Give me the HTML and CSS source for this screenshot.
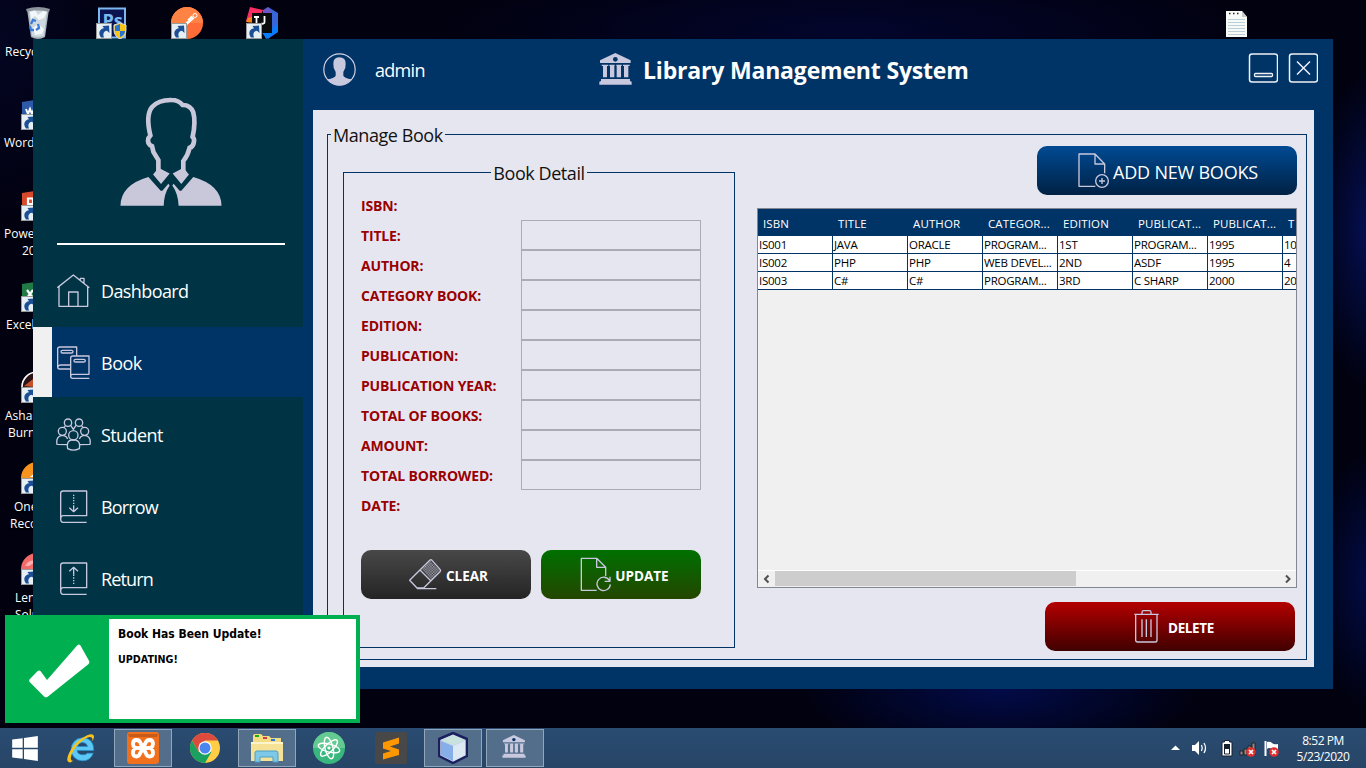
FILE: index.html
```html
<!DOCTYPE html>
<html lang="en">
<head>
<meta charset="utf-8">
<title>Library Management System</title>
<link rel="stylesheet" href="styles.css">
</head>
<body>
<svg width="0" height="0" class="defs">
  <defs>
    <symbol id="shortcut" viewBox="0 0 16 16">
      <rect x=".5" y=".5" width="15" height="15" fill="#e6f0f4" stroke="#9a9a9a"/>
      <path d="M5 14.500C1.500 10 4 5.500 8 5.200L6.500 3 13 2.500 13.500 10 11 7.800C8 8 6.500 10.500 8 14.500Z" fill="#1c4f96"/>
    </symbol>
    <symbol id="bank" viewBox="0 0 99 96">
      <path d="M49 0 95 22V30H3V22ZM8 35H28V39H8ZM31 35H47V39H31ZM52 35H68V39H52ZM72 35H92V39H72ZM12 39H24V73H12ZM33 39H46V73H33ZM53 39H66V73H53ZM75 39H88V73H75ZM6 78H93V84L98 86V95H1V86L6 84Z" fill="#c8c8de"/>
      <circle cx="49" cy="19" r="7" class="bank-hole"/>
    </symbol>
    <symbol id="badge" viewBox="0 0 10 10"><circle cx="5" cy="5" r="4.800" fill="#e03030"/><path d="M3 3 7 7M7 3 3 7" stroke="#fff" stroke-width="1.700"/></symbol>
  </defs>
</svg>

<div class="desktop">
  <svg class="icon recycle" viewBox="0 0 26 34" width="26" height="34">
    <path d="M2 3 24 3 20 31Q13 35 6 31Z" fill="#aab5bf"/><path d="M4 5 22 5 19 30Q13 32 7 30Z" fill="#cfd8de"/>
    <path d="M5 6 10 4 13 9 18 5 22 6 19 12 14 14 10 10 6 13ZM8 22 13 18 19 23 17 28 10 29Z" fill="#f3f7fa"/>
    <path d="M1 3Q13-1 25 3L24 6Q13 2 2 6Z" fill="#8d949a"/>
    <path d="M6 18 8 14 11 15M5 20 6 24 9 24M11 24 14 22 13 18" fill="none" stroke="#3a7bd8" stroke-width="2.300"/>
  </svg>
  <svg class="icon photoshop" viewBox="0 0 32 32" width="32" height="32">
    <rect x="3" y="1.500" width="26" height="29" fill="#0a1450" stroke="#7cb8f0" stroke-width="2"/>
    <text x="6.500" y="20" class="ps-text">Ps</text>
    <use href="#shortcut" x="0" y="16" width="16" height="16"/>
    <path d="M24 16 30 18V23Q30 29 24 32 18 29 18 23V18Z" fill="#f5c518" stroke="#d7dbe0"/><path d="M24 17V24H19V19ZM24 24H29Q29 28 24 30Z" fill="#2a72d0"/>
  </svg>
  <svg class="icon postman" viewBox="0 0 32 32" width="32" height="32">
    <circle cx="16" cy="16" r="16" fill="#ff6c37"/><path d="M0 16A16 16 0 0 1 32 16Z" fill="#ff8344"/>
    <circle cx="24" cy="8.500" r="2" fill="none" stroke="#fff"/><path d="M22 10 13 18M23 11 15 18M21 9 17 13" stroke="#fff" stroke-width="1.300"/>
    <use href="#shortcut" x="0" y="16" width="16" height="16"/>
  </svg>
  <svg class="icon intellij" viewBox="0 0 32 32" width="32" height="32">
    <path d="M4 0 17 3 12 16 0 14Z" fill="#fb2d60"/><path d="M2 11 8 9 8 16 0 15Z" fill="#f7821e"/><path d="M22 0 32 6 32 25 22 32 16 26Z" fill="#3766d8"/><path d="M26 22 32 16V25L20 32 17 26Z" fill="#087cfa"/><path d="M17 3 22 0 26 6H17Z" fill="#6a58c8"/>
    <rect x="6" y="6" width="20" height="20" fill="#0b0b0d"/><path d="M8 10H13M10.500 10V17M8 17H13M18.500 9V15Q18.500 17.300 15 16.600" fill="none" stroke="#fff" stroke-width="1.800"/>
    <use href="#shortcut" x="0" y="16" width="16" height="16"/>
  </svg>
  <svg class="icon notes" viewBox="0 0 21 26" width="21" height="26">
    <path d="M0 0H16L21 6V26H0Z" fill="#f8faf8"/><path d="M16 0V6H21Z" fill="#c8ccc8"/>
    <path d="M2 8.500H19M2 11.500H19M2 14.500H19M2 17.500H19M2 20.500H19M2 23.500H19" stroke="#b9cfd9"/>
    <path d="M3 2.500H4.500M7 2.500H8.500M11 2.500H12.500" stroke="#222" stroke-width="1.500"/>
  </svg>
  <span class="caption recycle-name">Recycle</span>

  <svg class="icon side-icon word" viewBox="0 0 32 32" width="32" height="32"><path d="M1 4 20 1V31H1Z" fill="#2c5aa8"/><path d="M5 11 7 16 9 11 11 16 13 11" fill="none" stroke="#fff" stroke-width="2"/><use href="#shortcut" x="0" y="16" width="16" height="16"/></svg>
  <span class="caption word-name">Word 2013</span>
  <svg class="icon side-icon powerpoint" viewBox="0 0 32 32" width="32" height="32"><path d="M1 4 20 1V31H1Z" fill="#d6492a"/><path d="M7 18V9.500H12V15H8" fill="none" stroke="#fff" stroke-width="2.200"/><use href="#shortcut" x="0" y="16" width="16" height="16"/></svg>
  <span class="caption powerpoint-name">PowerPoint<br><i>2013</i></span>
  <svg class="icon side-icon excel" viewBox="0 0 32 32" width="32" height="32"><path d="M1 4 20 1V31H1Z" fill="#217a46"/><path d="M6 10 12 18M12 10 6 18" stroke="#fff" stroke-width="2.200"/><use href="#shortcut" x="0" y="16" width="16" height="16"/></svg>
  <span class="caption excel-name">Excel 2013</span>
  <svg class="icon side-icon burning" viewBox="0 0 32 32" width="32" height="32"><circle cx="16" cy="16" r="15" fill="#2a1216" stroke="#fff" stroke-width="1.600"/><path d="M3 15 12 8V16Z" fill="#c4502a"/><use href="#shortcut" x="0" y="16" width="16" height="16"/></svg>
  <span class="caption burning-name">Ashampoo<br><i>Burning</i></span>
  <svg class="icon side-icon recorder" viewBox="0 0 32 32" width="32" height="32"><circle cx="16" cy="16" r="16" fill="#f8941d"/><path d="M9 15 16 9V15Z" fill="#fff"/><use href="#shortcut" x="0" y="16" width="16" height="16"/></svg>
  <span class="caption recorder-name">One Click<br><i>Recorder</i></span>
  <svg class="icon side-icon lenovo" viewBox="0 0 32 32" width="32" height="32"><circle cx="16" cy="16" r="16" fill="#f26a6a"/><path d="M4 13Q8 6 16 8L8 13Z" fill="#ffb0b0"/><use href="#shortcut" x="0" y="16" width="16" height="16"/></svg>
  <span class="caption lenovo-name">Lenovo<br><i>Solution</i></span>

  <section class="window">
    <aside class="sidebar">
      <svg class="portrait" viewBox="360 290 306 328" width="102" height="109">
        <path d="M475 515V480L460 455 456 438Q440 432 445 414L451 406Q436 345 456 320 476 298 515 299 535 299 548 314 572 314 580 336 588 365 578 410 584 416 582 425 580 440 569 443 564 466 550 483V515" fill="none" stroke="#c8c8da" stroke-width="14"/>
        <path d="M470 510 477 504 509 520 483 552 459 523ZM556 510 549 504 518 520 544 552 567 523ZM445 531 482 572H487L505 551 509 556Q492 580 491 617H361Q362 555 445 531ZM580 531 544 572H539L521 551 517 556Q534 580 536 617H665Q664 555 580 531Z" fill="#c8c8da"/>
      </svg>
      <hr class="rule">
      <nav class="menu">
        <a class="item"><svg viewBox="0 0 99 99" width="33" height="33"><path d="M1 41 49 3 97 41M6 38V97H92V38M35 97V54H63V97M70 17V13H81V28" class="line"/></svg><span>Dashboard</span></a>
        <a class="item active"><svg viewBox="0 0 99 99" width="33" height="33"><path d="M40 69H8Q2 69 2 62V9Q2 3 9 3H59V30M3 62Q5 57 11 57H40M16 13H44Q48 13 48 17T44 21H16Q12 21 12 17T16 13M97 97H47Q41 97 41 91V36Q41 30 47 30H96V85H47Q41 85 41 91M55 40H80Q85 40 85 44T80 48H55Q51 48 51 44T55 40" class="line"/></svg><span>Book</span></a>
        <a class="item"><svg class="wide" viewBox="0 0 105 99" width="35" height="33"><g class="line"><circle cx="36" cy="14" r="11"/><circle cx="69" cy="14" r="11"/><circle cx="19" cy="40" r="12"/><circle cx="86" cy="40" r="12"/><circle cx="52" cy="52" r="14"/><path d="M24 28 28 24M44 22 52 34 60 22M77 24 81 28M33 80 3 79Q-1 58 15 53H24Q32 55 35 63M72 80 102 79Q106 58 90 53H81Q73 55 70 63M35 92Q31 68 46 66H58Q74 68 70 92 52 101 35 92Z"/></g></svg><span>Student</span></a>
        <a class="item"><svg viewBox="0 0 99 99" width="33" height="33"><path d="M89 97H18Q11 97 11 88V10Q11 3 18 3H89V77H19Q11 77 11 86" class="line"/><path d="M50 14V46" class="line" stroke-dasharray="4 4"/><path d="M50 46V65M37 53 50 65 63 53" class="line"/></svg><span class="tight">Borrow</span></a>
        <a class="item"><svg viewBox="0 0 99 99" width="33" height="33"><path d="M89 97H18Q11 97 11 88V10Q11 3 18 3H89V77H19Q11 77 11 86" class="line"/><path d="M50 66V38" class="line" stroke-dasharray="4 4"/><path d="M50 38V16M37 28 50 16 63 28" class="line"/></svg><span class="tight">Return</span></a>
      </nav>
    </aside>

    <main class="main">
      <header class="header">
        <svg class="user" viewBox="0 0 99 99" width="33" height="33"><circle cx="49.500" cy="49.500" r="47" fill="none" stroke="#d5d5e6" stroke-width="3.500"/><path d="M49 13Q69 13 68 33 69 47 61 57V68Q63 75 86 79 70 97 49 97 28 97 13 79 36 75 38 68V57Q30 47 31 33 30 13 49 13Z" fill="#c8c8de"/></svg>
        <span class="user-name">admin</span>
        <svg class="logo" width="33" height="32"><use href="#bank"/></svg>
        <h1 class="title">Library Management System</h1>
        <svg class="win-btn" viewBox="0 0 30 30" width="30" height="30"><rect x="1.500" y="1" width="28" height="28" rx="2.500" class="frame"/><rect x="6.500" y="20.500" width="18" height="3" rx="1" class="frame thin"/></svg>
        <svg class="win-btn" viewBox="0 0 30 30" width="30" height="30"><rect x="1.500" y="1" width="28" height="28" rx="2.500" class="frame"/><path d="M9 8.500 22 21.500M22 8.500 9 21.500" class="frame"/></svg>
      </header>

      <div class="panel">
        <div class="group">
          <div class="legend outer"><span>Manage Book</span></div>
          <div class="columns">
            <div class="detail">
              <div class="legend inner"><span>Book Detail</span></div>
              <form class="form">
                <div class="row"><label>ISBN:</label></div>
                <div class="row"><label>TITLE:</label><input></div>
                <div class="row"><label>AUTHOR:</label><input></div>
                <div class="row"><label>CATEGORY BOOK:</label><input></div>
                <div class="row"><label>EDITION:</label><input></div>
                <div class="row"><label>PUBLICATION:</label><input></div>
                <div class="row"><label>PUBLICATION YEAR:</label><input></div>
                <div class="row"><label>TOTAL OF BOOKS:</label><input></div>
                <div class="row"><label>AMOUNT:</label><input></div>
                <div class="row"><label>TOTAL BORROWED:</label><input></div>
                <div class="row"><label>DATE:</label></div>
              </form>
              <div class="actions">
                <button class="btn clear"><svg viewBox="0 0 99 99" width="33" height="33"><defs><pattern id="dots" width="8" height="8" patternUnits="userSpaceOnUse"><path d="M0 0H4V4H0ZM4 4H8V8H4Z" fill="#a5a5b5"/></pattern></defs><path d="M39 34 63 8 92 37 68 66Z" fill="url(#dots)"/><path d="M63 6Q66 4 69 7L93 34Q96 38 93 41L44 90H24L2 67 63 6M33 36 66 69M24 92H82" class="line"/></svg><span>CLEAR</span></button>
                <button class="btn update"><svg viewBox="0 0 93 105" width="31" height="35"><path d="M50 100H4V4H50L77 31V57M50 4V31H77M88 70A20 20 0 1 0 91 82M74 73H90V59" class="line"/></svg><span>UPDATE</span></button>
              </div>
            </div>

            <div class="list">
              <button class="btn add"><svg viewBox="0 0 93 105" width="31" height="35"><path d="M52 100H3V3H51L80 33V61M51 3V33H80M72 75V93M63 84H81" class="line"/><circle cx="72" cy="84" r="19" class="line"/></svg><span>ADD NEW BOOKS</span></button>
              <div class="table">
                <div class="tr head"><span>ISBN</span><span>TITLE</span><span>AUTHOR</span><span>CATEGOR...</span><span>EDITION</span><span>PUBLICAT...</span><span>PUBLICAT...</span><span>T</span></div>
                <div class="tr"><span>IS001</span><span>JAVA</span><span>ORACLE</span><span>PROGRAM...</span><span>1ST</span><span>PROGRAM...</span><span>1995</span><span>10</span></div>
                <div class="tr"><span>IS002</span><span>PHP</span><span>PHP</span><span>WEB DEVEL...</span><span>2ND</span><span>ASDF</span><span>1995</span><span>4</span></div>
                <div class="tr"><span>IS003</span><span>C#</span><span>C#</span><span>PROGRAM...</span><span>3RD</span><span>C SHARP</span><span>2000</span><span>20</span></div>
                <div class="space"></div>
                <div class="scroll"><svg viewBox="0 0 17 17" width="17" height="17"><path d="M10.500 4.500 7 8 10.500 11.500" class="chev"/></svg><div class="thumb"></div><svg viewBox="0 0 17 17" width="17" height="17"><path d="M7 4.500 10.500 8 7 11.500" class="chev"/></svg></div>
              </div>
              <button class="btn delete"><svg viewBox="0 0 75 99" width="25" height="33"><path d="M5 14V90Q5 96 11 96H64Q69 96 69 90V14M1 13H74M24 13V7Q24 2 29 2H46Q51 2 51 7V13M24 28V81M37 28V81M51 28V81" class="line"/></svg><span>DELETE</span></button>
            </div>
          </div>
        </div>
      </div>
    </main>
  </section>

  <div class="toast">
    <div class="toast-mark"><svg viewBox="0 0 183 162" width="61" height="54"><path d="M2 106 26 81Q31 77 35 82L54 108 145 4Q150-1 154 4L180 50Q183 56 178 61L56 158Q51 162 46 158L2 114Q-1 110 2 106Z" fill="#fff"/></svg></div>
    <div class="toast-body"><p class="toast-title">Book Has Been Update!</p><p class="toast-text">UPDATING!</p></div>
  </div>

  <footer class="taskbar">
    <div class="task start"><svg viewBox="0 0 78 76" width="26" height="25"><path d="M0 11 32 7V36H0ZM36 6 78 0V36H36ZM0 40H32V69L0 65ZM36 40H78V76L36 70Z" fill="#fff"/></svg></div>
    <div class="task"><svg viewBox="0 0 90 92" width="30" height="31"><path d="M83 52H33Q36 66 52 65 60 65 64 60H82Q72 84 48 83 18 80 15 49 18 17 49 14 84 16 83 52ZM34 40H65Q62 28 49 28 37 29 34 40Z" fill="#5cc8f5" fill-rule="evenodd" stroke="#2490d0" stroke-width="2"/><path d="M13 88Q-4 86 10 58 28 22 62 7 84-2 84 12 82 20 79 24 82 8 65 13 38 25 21 55 7 82 22 83Z" fill="#f8c419"/></svg></div>
    <div class="task open"><svg viewBox="0 0 32 32" width="32" height="32"><rect width="32" height="32" rx="3" fill="#f0701e"/><path d="M1 2 31 2 30 5H2Z" fill="#c85a1a"/><g fill="none" stroke="#fff" stroke-width="3.800" stroke-linejoin="round"><path d="M13.500 11Q12.500 8 9.500 8 6 8 6 12 6 14 8 16 6 18 6 21 6 24.500 9.500 24.500 12 24.500 13 21.500L18.500 11Q19.500 8 22.500 8 26 8 26 12 26 14 24 16 26 18 26 21 26 24.500 22.500 24.500 20 24.500 19 21.500L13.500 11"/><path d="M8 16H24"/></g></svg></div>
    <div class="task"><svg viewBox="0 0 30 30" width="30" height="30"><circle cx="15" cy="15" r="15" fill="#ffcd46"/><path d="M2 7.500A15 15 0 0 1 28 7.500H15L8.500 18.700Z" fill="#dd4b3e"/><path d="M2 7.500A15 15 0 0 0 15 30L21.500 18.700 8.500 18.700Z" fill="#1aa15f"/><circle cx="15" cy="15" r="6.700" fill="#fff"/><circle cx="15" cy="15" r="5.500" fill="#4b85f0"/></svg></div>
    <div class="task open"><svg viewBox="0 0 34 30" width="34" height="30"><path d="M3 3Q3 1 5 1H11L13 3H19L21 5H31V27H3Z" fill="#f4dc83"/><path d="M5 2H9V4H5Z" fill="#18b018"/><path d="M13 4H17V6H13Z" fill="#d04040"/><path d="M21 6H25V8H21Z" fill="#2878e0"/><path d="M1 9H33V28H1Z" fill="#f6e296"/><path d="M1 9H33V11H1Z" fill="#fff4cc"/><path d="M5 29V20Q5 18 7 18H26Q28 18 28 20V29H23V24H10V29Z" fill="#7ec8e8" stroke="#4aa0cc"/></svg></div>
    <div class="task"><svg viewBox="0 0 32 32" width="32" height="32"><circle cx="16" cy="16" r="16" fill="#3ab77e"/><path d="M0 16A16 16 0 0 1 32 16Z" fill="#63ca92"/><g fill="none" stroke="#fff" stroke-width="1.400"><ellipse cx="16" cy="16" rx="4" ry="11" transform="rotate(-14 16 16)"/><ellipse cx="16" cy="16" rx="4" ry="11" transform="rotate(46 16 16)"/><ellipse cx="16" cy="16" rx="4" ry="11" transform="rotate(-75 16 16)"/></g><circle cx="16" cy="16" r="1.600" fill="#fff"/></svg></div>
    <div class="task"><svg viewBox="0 0 32 32" width="32" height="32"><rect width="32" height="32" rx="2" fill="#484848"/><path d="M24 5.500V11.500L15 14.500 24 17.500V23L8 27.500V21.500L16 19 8 16.500V10.500Z" fill="#ff9800"/></svg></div>
    <div class="task open"><svg viewBox="0 0 30 32" width="30" height="32"><path d="M15 1 29 7V24L15 31 1 24V7Z" fill="#c4d6ec" stroke="#1b1f5e" stroke-width="2.500" stroke-linejoin="round"/><path d="M3 8 15 3 27 8 15 13Z" fill="#c9e2dc"/><path d="M3 9 15 14V29L3 23Z" fill="#86aee8"/><path d="M15 14 27 9V23L15 29Z" fill="#dce8f2"/></svg></div>
    <div class="task open bank-task"><svg width="24" height="23"><use href="#bank"/></svg></div>
    <div class="tray">
      <svg viewBox="0 0 108 20" width="108" height="20">
        <path d="M0 12 4.500 7.500 9 12Z" fill="#fff"/>
        <path d="M21 7H24L28 3V17L24 13H21Z" fill="#fff"/><path d="M30.500 7Q32 10 30.500 13M33 5Q36 10 33 15" fill="none" stroke="#fff" stroke-width="1.300"/>
        <path d="M51 4H53.500V2.500H58.500V4H61V18H51Z" fill="#fff" stroke="#16202c"/><path d="M53 6H59V11H53Z" fill="#16202c"/><path d="M53.500 11V16H58.500V11" fill="none" stroke="#16202c"/>
        <path d="M69 13H72V17H69ZM73 11H76V17H73ZM77 8H80V17H77ZM81 5H84V17H81Z" fill="#8a8f96" stroke="#222"/>
        <path d="M94.500 3V18" stroke="#fff" stroke-width="2"/><path d="M96 4Q99 3 101 5T107 6V12Q104 13 101 11T96 11Z" fill="#fff"/>
        <use href="#badge" x="75" y="9" width="10" height="10"/><use href="#badge" x="98" y="9" width="10" height="10"/>
      </svg>
    </div>
    <div class="clock"><span>8:52 PM</span><span>5/23/2020</span></div>
  </footer>
</div>
</body>
</html>
```
FILE: styles.css
```css
* { box-sizing: border-box; }
body { margin: 0; overflow: hidden; font-family: "Open Sans", "Noto Sans", sans-serif; }
svg { display: block; flex: none; }
.defs { position: absolute; }
.desktop {
  position: relative; width: 1366px; height: 768px; overflow: hidden;
  background:
    radial-gradient(ellipse 50px 160px at 1366px 230px, #040f50 0%, transparent 100%),
    radial-gradient(ellipse 200px 70px at 1000px 690px, #020b48 0%, transparent 100%),
    radial-gradient(ellipse 50px 130px at 1366px 580px, #020b44 0%, transparent 100%),
    radial-gradient(ellipse 420px 70px at 850px 30px, #03052c 0%, transparent 100%),
    radial-gradient(ellipse 120px 180px at 0 50px, #040622 0%, transparent 100%),
    #01010f;
}
.icon, .caption { position: absolute; }
.recycle { left: 25px; top: 6px; }
.photoshop { left: 96px; top: 7px; }
.ps-text { font: 700 18px "Open Sans", sans-serif; fill: #7cb8f0; }
.postman { left: 171px; top: 7px; }
.intellij { left: 246px; top: 7px; }
.notes { left: 1226px; top: 11px; }
.side-icon { left: 21px; }
.word { top: 98px; }
.powerpoint { top: 189px; }
.excel { top: 280px; }
.burning { top: 371px; }
.recorder { top: 462px; }
.lenovo { top: 553px; }
.caption { color: #fff; font-size: 12px; line-height: 17px; white-space: nowrap; text-shadow: 0 1px 2px #000; }
.caption i { font-style: normal; }
.recycle-name { left: 5px; top: 43px; }
.word-name { left: 4px; top: 134px; }
.powerpoint-name { left: 4px; top: 225px; }
.powerpoint-name i { padding-left: 18px; }
.excel-name { left: 6px; top: 316px; }
.burning-name { left: 5px; top: 407px; }
.burning-name i { padding-left: 3px; }
.recorder-name { left: 14px; top: 498px; }
.recorder-name i { margin-left: -4px; }
.lenovo-name { left: 15px; top: 589px; }

.window { position: absolute; left: 33px; top: 39px; width: 1300px; height: 650px; display: flex; background: #003366; }
.sidebar { width: 270px; background: #003344; padding-top: 58px; }
.portrait { margin-left: 87px; }
.rule { margin: 37px 18px 10px 24px; height: 2px; border: 0; background: #fff; }
.menu { display: flex; flex-direction: column; gap: 2px; }
.item { display: flex; align-items: center; height: 70px; padding-left: 24px; gap: 11px; color: #fff; font-size: 18px; letter-spacing: -.6px; }
.item span { padding-top: 1px; }
.item .tight { letter-spacing: -.85px; }
.item.active { background: #003366; border-left: 19px solid #f0f0f0; padding-left: 5px; letter-spacing: -.5px; }
.item .wide { margin: 0 -1px; }
.line { fill: none; stroke: #c8c8de; stroke-width: 4; stroke-linejoin: round; }
.main { flex: 1; display: flex; flex-direction: column; padding: 0 19px 22px 10px; }
.header { height: 71px; display: flex; padding: 14px 0 0 10px; color: #fff; }
.user-name { width: 224px; margin-left: 19px; padding-top: 5px; font-size: 18px; line-height: 25px; letter-spacing: -.7px; }
.bank-hole { fill: #003366; }
.title { flex: 1; margin: 1px 0 0 11px; font-size: 23px; line-height: 33px; letter-spacing: -.18px; white-space: nowrap; }
.win-btn + .win-btn { margin-left: 10px; }
.header .win-btn:last-child { margin-right: -4px; }
.frame { fill: none; stroke: #eef1f8; stroke-width: 1.5; }
.thin { stroke-width: 1.3; }
.panel { flex: 1; background: #e6e6f0; padding: 24px 7px 7px 14px; }
.group { height: 526px; border: 1px solid #003366; }
.legend { display: flex; height: 24px; margin-top: -12px; line-height: 24px; font-size: 18px; letter-spacing: -.44px; color: #111; }
.legend span { background: #e6e6f0; padding: 0 2px; }
.outer { padding-left: 3px; }
.inner { justify-content: center; }
.columns { display: flex; justify-content: space-between; margin-top: -1px; padding: 0 9px 0 15px; }
.detail { width: 392px; height: 476px; margin-top: 26px; border: 1px solid #003366; }
.form { margin: 5px 0 0 17px; }
.row { display: flex; align-items: center; height: 30px; width: 340px; justify-content: space-between; color: #990000; font-weight: 700; font-size: 14px; letter-spacing: -.17px; }
.row input { width: 180px; height: 30px; margin: 0; border: 1px solid #ababb3; background: #e6e6f0; }
.actions { display: flex; gap: 10px; margin: 30px 0 0 17px; }
.btn { display: flex; align-items: center; justify-content: center; height: 49px; padding: 0; border: 0; border-radius: 10px; color: #fff; font: 700 13.5px "Open Sans", sans-serif; }
.btn span { padding-top: 2px; }
.clear { width: 170px; gap: 4px; padding-left: 5px; background: linear-gradient(#484848, #242424); }
.update { width: 160px; gap: 4px; padding-left: 7px; background: linear-gradient(#007000, #244600); }
.list { display: flex; flex-direction: column; align-items: flex-end; width: 540px; }
.add { width: 260px; gap: 4px; padding-left: 2px; background: linear-gradient(#004a94, #002143); font-weight: 400; font-size: 18px; letter-spacing: -.2px; }
.delete { width: 250px; gap: 9px; padding-left: 8px; margin: 14px 2px 0 0; background: linear-gradient(#b40000, #400000); letter-spacing: -.35px; }
.table { display: flex; flex-direction: column; width: 540px; height: 380px; margin-top: 13px; border: 1px solid #828790; background: #f0f0f0; overflow: hidden; }
.tr { display: flex; flex: none; height: 18px; font-size: 11.5px; line-height: 17px; letter-spacing: -.25px; background: #fff; color: #000; }
.tr span { flex: none; width: 75px; padding-left: 1px; border-right: 1px solid #003366; border-bottom: 1px solid #003366; white-space: nowrap; }
.tr.head { height: 27px; background: #003366; color: #fff; line-height: 29px; letter-spacing: .12px; }
.tr.head span { padding-left: 5px; }
.space { flex: 1; }
.scroll { display: flex; height: 17px; border-top: 1px solid #fff; }
.thumb { width: 301px; height: 15px; margin-right: auto; background: #cdcdcd; }
.chev { fill: none; stroke: #505050; stroke-width: 2; }

.toast { position: absolute; left: 5px; top: 615px; width: 355px; height: 108px; display: flex; border: 4px solid #00b050; background: #fff; color: #000; font-family: "DejaVu Sans Condensed", "DejaVu Sans", sans-serif; font-weight: 700; }
.toast-mark { width: 100px; background: #00b050; padding: 25px 0 0 20px; }
.toast-body { padding: 6px 9px; }
.toast p { margin: 0; white-space: nowrap; }
.toast-title { font-size: 12px; line-height: 18px; }
.toast .toast-text { margin-top: 10px; font: 700 9.6px/14px "DejaVu Sans", sans-serif; }

.taskbar { position: absolute; left: 0; bottom: 0; width: 1366px; height: 40px; display: flex; align-items: center; background: linear-gradient(#2a4c72, #274566); }
.task { display: flex; align-items: center; justify-content: center; width: 58px; height: 38px; margin: 0 2px; }
.task.start { width: 50px; margin: 0; }
.task.open { background: #526e8b; border: 1px solid #93a6b9; }
.task.bank-task { padding: 0 2px 3px 0; }
.taskbar .bank-hole { fill: #526e8b; }
.tray { margin-left: auto; }
.clock { display: flex; flex-direction: column; align-items: center; width: 70px; margin: 2px 8px 0 9px; color: #fff; font-size: 12px; line-height: 16px; letter-spacing: -.45px; }
```
